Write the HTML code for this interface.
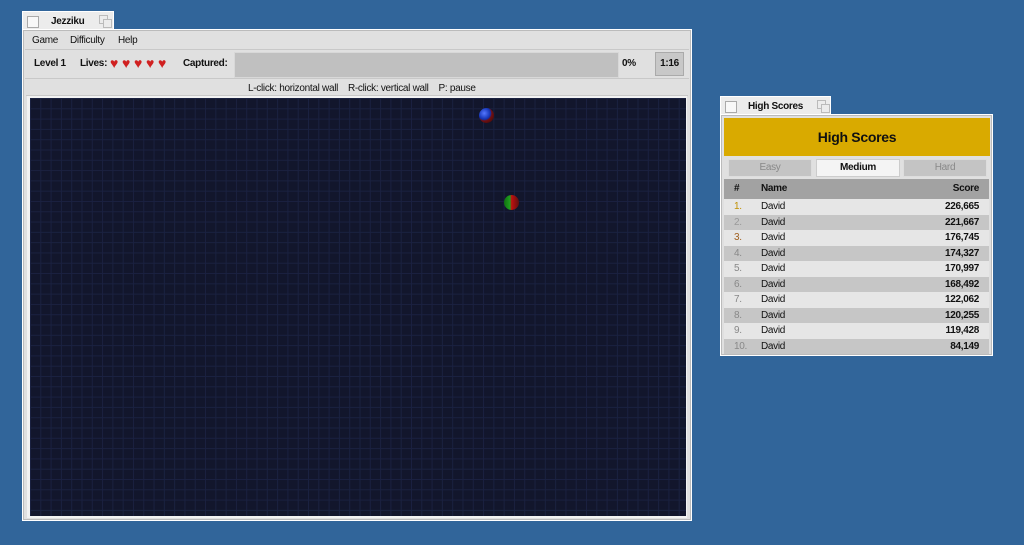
<!DOCTYPE html><html><head><style>
body{margin:0;width:1024px;height:545px;background:#31659a;font-family:"Liberation Sans","DejaVu Sans",sans-serif;font-size:10px;letter-spacing:-0.3px;position:relative;overflow:hidden;color:#111}
.a{position:absolute}
.tab{background:#ececec;border:1px solid #fff;border-bottom:none;box-sizing:border-box}
.chk{position:absolute;left:4px;top:4px;width:10px;height:10px;border:1px solid #aaa;background:#f8f8f8}
.win{background:#e0e0e0;border:1px solid #fff;box-shadow:inset 0 0 0 1px #bbb;box-sizing:border-box}
b{font-weight:bold}
.row{position:absolute;left:3px;width:265px;height:15.5px;line-height:15px}
.h{position:absolute;top:25px;color:#d02020;font-size:14px}
</style></head><body>
<div class="a tab" style="left:22px;top:11px;width:92px;height:19px"><div class="chk"></div><div class="a" style="left:28px;top:4px;font-weight:bold">Jezziku</div><div class="a" style="left:76px;top:3px;width:7px;height:7px;border:1px solid #bbb"></div><div class="a" style="left:80px;top:7px;width:7px;height:7px;border:1px solid #bbb;background:#ececec"></div></div>
<div class="a win" style="left:22px;top:29px;width:670px;height:492px">
<div class="a" style="left:9px;top:5px">Game</div><div class="a" style="left:47px;top:5px">Difficulty</div><div class="a" style="left:95px;top:5px">Help</div>
<div class="a" style="left:2px;top:19px;width:664px;height:1px;background:#c8c8c8"></div>
<div class="a" style="left:11px;top:28px;font-weight:bold">Level 1</div>
<div class="a" style="left:57px;top:28px;font-weight:bold">Lives:</div>
<span class="h" style="left:87px">♥</span><span class="h" style="left:99px">♥</span><span class="h" style="left:111px">♥</span><span class="h" style="left:123px">♥</span><span class="h" style="left:135px">♥</span>
<div class="a" style="left:160px;top:28px;font-weight:bold">Captured:</div>
<div class="a" style="left:211px;top:22px;width:383px;height:24px;background:#c0c0c0;border:1px solid #d8d8d8"></div>
<div class="a" style="left:599px;top:28px;font-weight:bold">0%</div>
<div class="a" style="left:632px;top:22px;width:27px;height:22px;background:#c8c8c8;border:1px solid #aaa;text-align:center;line-height:22px;font-weight:bold">1:16</div>
<div class="a" style="left:2px;top:48px;width:664px;height:1px;background:#c8c8c8"></div>
<div class="a" style="left:225px;top:53px">L-click: horizontal wall &nbsp;&nbsp; R-click: vertical wall &nbsp;&nbsp; P: pause</div>
<div class="a" style="left:3px;top:65px;width:662px;height:1px;background:#c8c8c8"></div>
<div class="a" style="left:4px;top:66px;width:660px;height:422px;background:#f2f2f2"></div>
<div class="a" style="left:7px;top:68px;width:656px;height:418px;background-color:#12162c;background-image:linear-gradient(#1a2140 1px,transparent 1px),linear-gradient(90deg,#1a2140 1px,transparent 1px);background-size:10.3px 10.3px"></div>
<div class="a" style="left:456px;top:78px;width:15px;height:15px;border-radius:50%;background:radial-gradient(circle at 35% 35%,#5577ff,#1030b0 45%,#701010 55%,#300808)"></div>
<div class="a" style="left:481px;top:165px;width:15px;height:15px;border-radius:50%;background:linear-gradient(90deg,#107010,#20a020 40%,#c01010 50%,#601010)"></div>
</div>
<div class="a tab" style="left:720px;top:96px;width:111px;height:19px"><div class="chk"></div><div class="a" style="left:27px;top:4px;font-weight:bold">High Scores</div><div class="a" style="left:96px;top:3px;width:7px;height:7px;border:1px solid #bbb"></div><div class="a" style="left:100px;top:7px;width:7px;height:7px;border:1px solid #bbb;background:#ececec"></div></div>
<div class="a win" style="left:720px;top:114px;width:273px;height:242px">
<div class="a" style="left:3px;top:3px;width:266px;height:38px;background:#d9aa00;text-align:center;line-height:38px;font-size:14px;font-weight:bold">High Scores</div>
<div class="a" style="left:7px;top:44px;width:82px;height:16px;background:#c4c4c4;border:1px solid #ddd;text-align:center;line-height:16px;color:#888">Easy</div>
<div class="a" style="left:95px;top:44px;width:82px;height:16px;background:#f4f4f4;border:1px solid #ccc;text-align:center;line-height:16px;font-weight:bold">Medium</div>
<div class="a" style="left:182px;top:44px;width:82px;height:16px;background:#c4c4c4;border:1px solid #ddd;text-align:center;line-height:16px;color:#888">Hard</div>
<div class="row" style="top:64px;height:20px;line-height:20px;background:#a2a2a2;font-weight:bold"><span class="a" style="left:10px">#</span><span class="a" style="left:37px">Name</span><span class="a" style="right:10px">Score</span></div>
<div class="row" style="top:84px;background:#e6e6e6"><span class="a" style="left:10px;color:#c09000">1.</span><span class="a" style="left:37px">David</span><b class="a" style="right:10px">226,665</b></div>
<div class="row" style="top:99.5px;background:#c6c6c6"><span class="a" style="left:10px;color:#999">2.</span><span class="a" style="left:37px">David</span><b class="a" style="right:10px">221,667</b></div>
<div class="row" style="top:115px;background:#e6e6e6"><span class="a" style="left:10px;color:#a06020">3.</span><span class="a" style="left:37px">David</span><b class="a" style="right:10px">176,745</b></div>
<div class="row" style="top:130.5px;background:#c6c6c6"><span class="a" style="left:10px;color:#888">4.</span><span class="a" style="left:37px">David</span><b class="a" style="right:10px">174,327</b></div>
<div class="row" style="top:146px;background:#e6e6e6"><span class="a" style="left:10px;color:#888">5.</span><span class="a" style="left:37px">David</span><b class="a" style="right:10px">170,997</b></div>
<div class="row" style="top:161.5px;background:#c6c6c6"><span class="a" style="left:10px;color:#888">6.</span><span class="a" style="left:37px">David</span><b class="a" style="right:10px">168,492</b></div>
<div class="row" style="top:177px;background:#e6e6e6"><span class="a" style="left:10px;color:#888">7.</span><span class="a" style="left:37px">David</span><b class="a" style="right:10px">122,062</b></div>
<div class="row" style="top:192.5px;background:#c6c6c6"><span class="a" style="left:10px;color:#888">8.</span><span class="a" style="left:37px">David</span><b class="a" style="right:10px">120,255</b></div>
<div class="row" style="top:208px;background:#e6e6e6"><span class="a" style="left:10px;color:#888">9.</span><span class="a" style="left:37px">David</span><b class="a" style="right:10px">119,428</b></div>
<div class="row" style="top:223.5px;background:#c6c6c6"><span class="a" style="left:10px;color:#888">10.</span><span class="a" style="left:37px">David</span><b class="a" style="right:10px">84,149</b></div>
</div>
</body></html>
